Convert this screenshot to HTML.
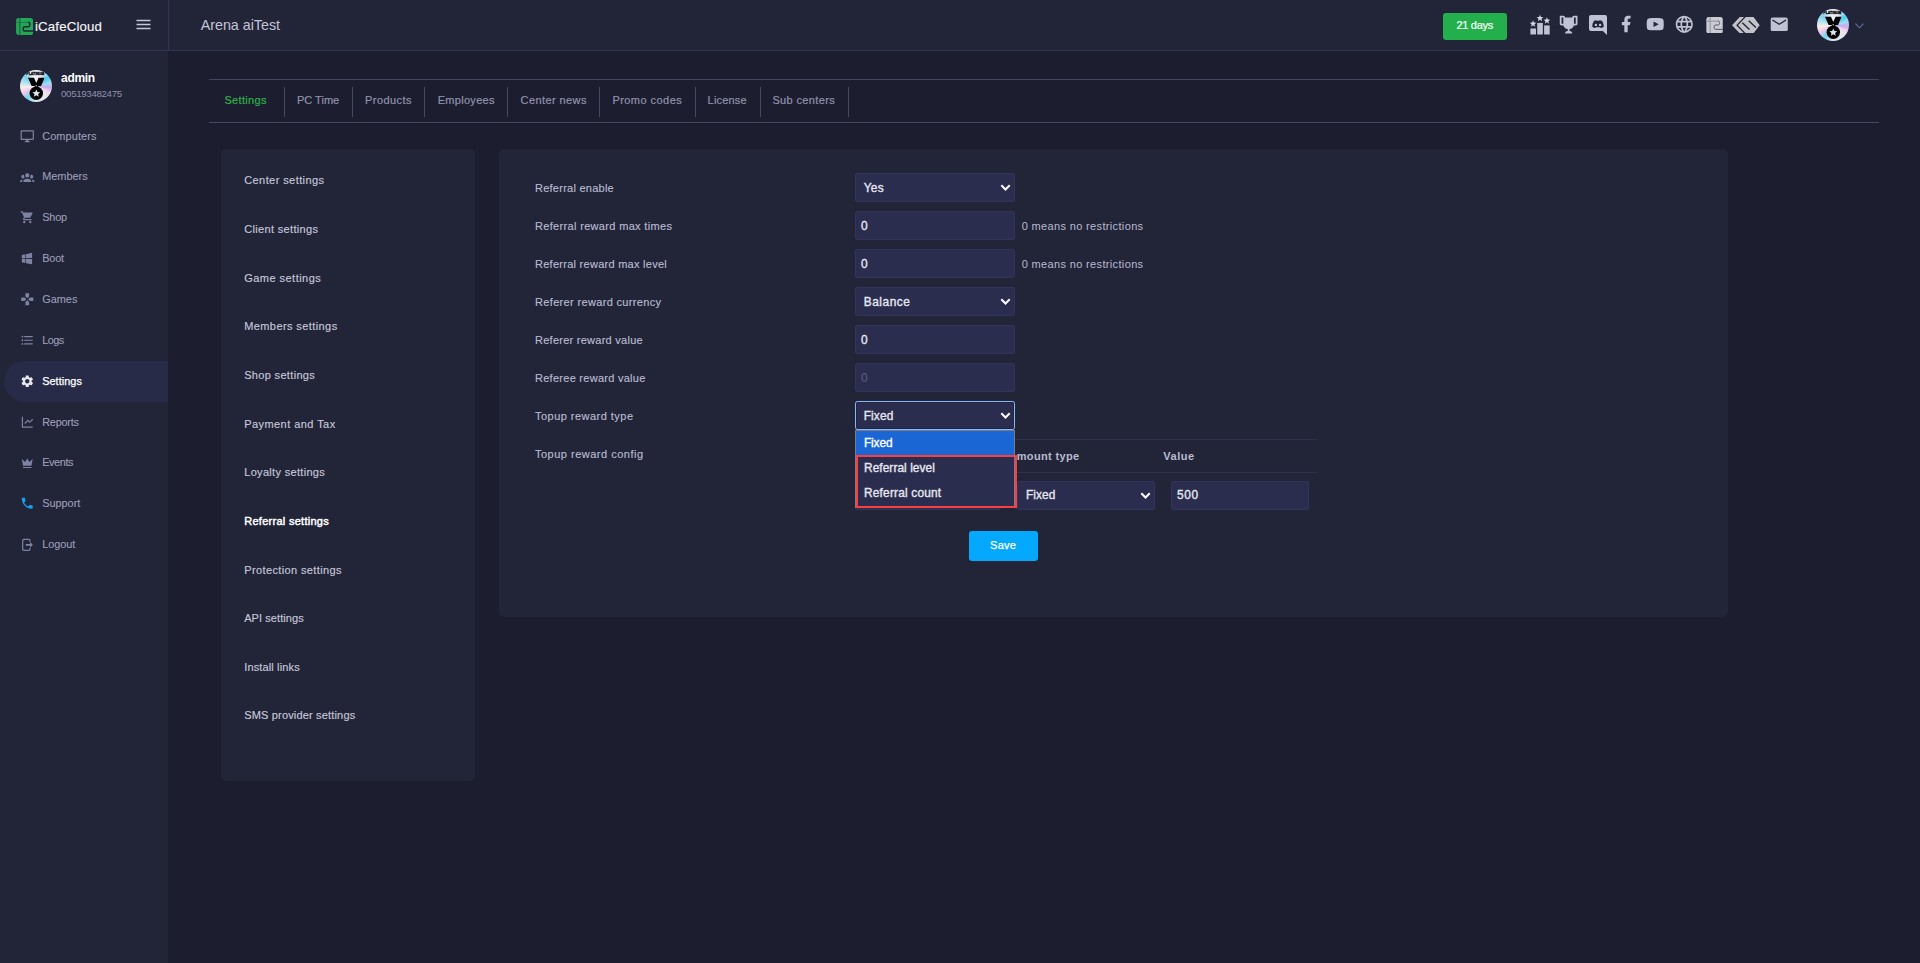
<!DOCTYPE html>
<html lang="en"><head><meta charset="utf-8"><title>iCafeCloud - Referral settings</title>
<style>
html,body{margin:0;padding:0}
body{width:1920px;height:963px;overflow:hidden;background:#1c1d2f;font-family:"Liberation Sans",sans-serif;position:relative;color:#c9cbdd}
div,span,a,nav,header,main,section,ul,li,label,button{box-sizing:border-box}
.a{position:absolute}
.t{position:absolute;white-space:nowrap;display:block}
svg{display:block}
header{position:absolute;left:0;top:0;width:1920px;height:51px;background:#222438;border-bottom:1px solid #323456}
nav.side{position:absolute;left:0;top:51px;width:168px;height:912px;background:#222438}
.vline{position:absolute;left:168px;top:0;width:1px;height:50px;background:#323456}
.active{position:absolute;left:3.500px;top:360.500px;width:164.500px;height:41px;border-radius:20.500px 0 0 20.500px;background:#282b47}
.panel{position:absolute;background:#222438;border-radius:5px}
.tabs{position:absolute;left:209px;top:79px;width:1670px;height:44px;border-top:1px solid #44465f;border-bottom:1px solid #44465f}
.sep{position:absolute;top:87px;width:1px;height:30px;background:#474961}
.in{position:absolute;height:29px;background:#2b2d4e;border:1px solid #32345a;border-radius:2px}
.av{width:32px;height:32px;border-radius:50%;overflow:hidden;background:conic-gradient(from 0deg,#eef1f7 0deg,#efe4f3 28deg,#49cbee 55deg,#a6dbf1 78deg,#c6a9ee 96deg,#f3d9ee 116deg,#e6e9f1 140deg,#dde5ee 180deg,#73d4ee 214deg,#eec9eb 240deg,#faeee8 264deg,#a9e0ef 290deg,#7fd1ea 312deg,#e6eef5 338deg,#eef1f7 360deg)}
.hl{position:absolute;height:1px;background:#2f3152}
</style></head>
<body>
<header>
<svg class="a" style="left:16px;top:18px" width="17.2" height="17" viewBox="0 0 17 17"><rect x="0" y="0" width="17" height="17" rx="2.4" fill="#22a854"/><path d="M3.750 0V17" fill="none" stroke="#1b4d40" stroke-width=".9"/><path d="M0 4.400H12.200" fill="none" stroke="#1d6847" stroke-width=".7"/><path d="M12 4.300c1.200 0 1.700.6 1.700 1.600v1.200c0 1-.5 1.600-1.700 1.600H8.800c-1.200 0-1.700.6-1.700 1.600v1.200c0 1 .5 1.600 1.700 1.600H17" fill="none" stroke="#222438" stroke-width="1.500"/></svg>
<span class="t" style="left:35.0px;top:17.2px;font-size:13.2px;line-height:20px;color:#f4f4f6;letter-spacing:0.19px;-webkit-text-stroke:.15px #f4f4f6;">iCafeCloud</span>
<svg class="a" style="left:136px;top:19px" width="16" height="11" viewBox="0 0 16 11"><path d="M0.5 1.5h14M0.5 5.500h14M0.5 9.500h14" stroke="#c4c6da" stroke-width="1.4" fill="none"/></svg>
<div class="vline"></div>
<span class="t" style="left:200.7px;top:14.8px;font-size:14.3px;line-height:20px;color:#c3c5d8;letter-spacing:-0.01px;">Arena aiTest</span>
<div class="a" style="left:1443px;top:13px;width:64px;height:27px;border-radius:3px;background:#23b04c"></div>
<span class="t" style="left:1456.4px;top:17.2px;font-size:11px;line-height:16px;color:#fff;letter-spacing:-0.27px;-webkit-text-stroke:.2px #fff;">21 days</span>
<svg class="a" style="left:1530px;top:15.600px;overflow:visible" width="20" height="18.500" viewBox="0 0 20 18.500" fill="#bfc2d2"><rect x="0.400" y="12.500" width="5.600" height="6"/><rect x="7.250" y="6.900" width="5.600" height="11.600"/><rect x="14.100" y="9.400" width="5.600" height="9.100"/><g fill="#d6d8e3"><path d="M3.10 4.20 L3.99 6.58 L6.52 6.69 L4.54 8.27 L5.22 10.71 L3.10 9.31 L0.98 10.71 L1.66 8.27 L-0.32 6.69 L2.21 6.58Z"/><path d="M10.00 -1.30 L10.89 1.08 L13.42 1.19 L11.44 2.77 L12.12 5.21 L10.00 3.81 L7.88 5.21 L8.56 2.77 L6.58 1.19 L9.11 1.08Z"/><path d="M16.90 1.20 L17.79 3.58 L20.32 3.69 L18.34 5.27 L19.02 7.71 L16.90 6.31 L14.78 7.71 L15.46 5.27 L13.48 3.69 L16.01 3.58Z"/></g></svg>
<svg class="a" style="position:absolute;left:1558.2px;top:14.2px;color:#bfc2d2" width="21.3" height="21.3" viewBox="0 0 24 24" fill="#bfc2d2" ><path d="M20.2,2H19.5H18C17.1,2 16,3 16,4H8C8,3 6.9,2 6,2H4.5H3.8H2V11C2,12 3,13 4,13H6.2C6.6,15 7.9,16.7 11,17V19.1C8.8,19.3 8,20.4 8,21.7V22H16V21.700C16,20.400 15.2,19.3 13,19.100V17C16.1,16.700 17.4,15 17.800,13H20C21,13 22,12 22,11V2H20.2M4,11V4H6V6V11C5.1,11 4.300,11 4,11M20,11C19.7,11 18.900,11 18,11V6V4H20V11Z"/></svg>
<svg class="a" style="left:1589px;top:15px" width="18" height="20" viewBox="0 0 18 20"><path d="M2 0h14a2 2 0 0 1 2 2v18l-4.200-4H2a2 2 0 0 1-2-2V2a2 2 0 0 1 2-2z" fill="#bfc2d2"/><g transform="translate(9 9.900) scale(1.22) translate(-9 -9.300)"><path d="M4.300 10.800c.1-2 .6-3.600 1.500-4.800 1-.5 1.700-.6 2-.6l.2.500h2l.2-.5c.3 0 1 .1 2 .6.900 1.200 1.400 2.800 1.500 4.800-.8.700-1.700 1-2.500 1.100l-.5-.8c-1.100.3-2.300.3-3.400 0l-.5.800c-.8-.1-1.700-.4-2.500-1.100z" fill="#222338"/><circle cx="7.300" cy="9.300" r="1" fill="#bfc2d2"/><circle cx="10.700" cy="9.300" r="1" fill="#bfc2d2"/></g></svg>
<svg class="a" style="position:absolute;left:1616.4px;top:14.2px;color:#bfc2d2" width="20" height="20" viewBox="0 0 24 24" fill="#bfc2d2" ><path d="M14 13.5h2.500l1-4H14v-2c0-1.030 0-2 2-2h1.500V2.140c-.326-.043-1.557-.14-2.857-.14C11.928 2 10 3.657 10 6.700v2.800H7v4h3V22h4v-8.500z"/></svg>
<svg class="a" style="position:absolute;left:1645.2px;top:15px;color:#bfc2d2" width="20.5" height="18.4" viewBox="0 0 24 24" fill="#bfc2d2" preserveAspectRatio="none"><path fill-rule="evenodd" d="M21.543 6.498C22 8.280 22 12 22 12s0 3.720-.457 5.502c-.254.985-.997 1.760-1.938 2.022C17.896 20 12 20 12 20s-5.893 0-7.605-.476c-.945-.266-1.687-1.040-1.938-2.022C2 15.720 2 12 2 12s0-3.720.457-5.502c.254-.985.997-1.760 1.938-2.022C6.107 4 12 4 12 4s5.896 0 7.605.476c.945.266 1.687 1.040 1.938 2.022zM10 15.500l6-3.500-6-3.500v7z"/></svg>
<svg class="a" style="position:absolute;left:1674.2px;top:13.9px;color:#bfc2d2" width="20.6" height="20.6" viewBox="0 0 24 24" fill="#bfc2d2" ><path d="M16.36,14C16.44,13.34 16.5,12.68 16.5,12C16.5,11.32 16.44,10.66 16.36,10H19.74C19.9,10.64 20,11.31 20,12C20,12.69 19.9,13.36 19.74,14M14.59,19.56C15.19,18.45 15.65,17.25 15.97,16H18.92C17.96,17.65 16.43,18.93 14.59,19.56M14.34,14H9.66C9.56,13.34 9.5,12.68 9.5,12C9.5,11.32 9.56,10.65 9.66,10H14.34C14.43,10.65 14.5,11.32 14.5,12C14.5,12.68 14.43,13.34 14.34,14M12,19.96C11.17,18.76 10.5,17.43 10.09,16H13.91C13.5,17.43 12.83,18.76 12,19.96M8,8H5.08C6.03,6.34 7.57,5.06 9.4,4.44C8.8,5.55 8.35,6.75 8,8M5.08,16H8C8.35,17.25 8.8,18.45 9.4,19.56C7.57,18.93 6.03,17.65 5.08,16M4.26,14C4.1,13.36 4,12.69 4,12C4,11.31 4.1,10.64 4.26,10H7.64C7.56,10.66 7.5,11.32 7.5,12C7.5,12.68 7.56,13.34 7.64,14M12,4.03C12.83,5.23 13.5,6.57 13.91,8H10.09C10.5,6.57 11.17,5.23 12,4.03M18.92,8H15.97C15.65,6.75 15.19,5.55 14.59,4.44C16.43,5.07 17.96,6.34 18.92,8M12,2C6.47,2 2,6.5 2,12A10,10 0 0,0 12,22A10,10 0 0,0 22,12A10,10 0 0,0 12,2Z"/></svg>
<svg class="a" style="left:1705.500px;top:16.500px" width="17.100" height="16.400" viewBox="0 0 17 17"><rect x="0" y="0" width="17" height="17" rx="2.400" fill="#cbccd1"/><path d="M3.900 0V17M0 4.300H12.200" fill="none" stroke="#85879a" stroke-width=".9"/><path d="M12 4.300c1.200 0 1.700.6 1.700 1.600v.8c0 1-.5 1.600-1.700 1.600H9.800c-1.200 0-1.700.6-1.700 1.600v1.300c0 1 .5 1.600 1.700 1.600H17" fill="none" stroke="#4d4f66" stroke-width="1"/></svg>
<svg class="a" style="left:1732.200px;top:16.800px" width="27.700" height="16.300" viewBox="0 0 27.700 16.300"><path d="M7.800 0H12L4.200 8.150 12 16.300H7.800L0 8.150z" fill="#c3c4c9"/><path d="M13.800 0h7.700l6.200 8.150-6.200 8.150h-7.700L6 8.150z" fill="#c3c4c9"/><path d="M10.300 5.700l7.200 6.900M16.700 3.700l7.200 6.700" stroke="#222438" stroke-width="1.400" fill="none"/></svg>
<svg class="a" style="position:absolute;left:1769.3px;top:14.2px;color:#bfc2d2" width="20.5" height="20.5" viewBox="0 0 24 24" fill="#bfc2d2" ><path d="M20 4H4c-1.100 0-1.990.9-1.990 2L2 18c0 1.100.9 2 2 2h16c1.100 0 2-.9 2-2V6c0-1.100-.9-2-2-2zm0 4l-8 5-8-5V6l8 5 8-5v2z"/></svg>
<div class="a av" style="left:1817px;top:9px"><svg width="32" height="32" viewBox="0 0 32 32"><text x="15.300" y="4.900" font-family="Liberation Sans, sans-serif" font-size="3.900" font-weight="700" text-anchor="middle" textLength="18" lengthAdjust="spacingAndGlyphs" fill="#000" stroke="#000" stroke-width=".3">PLATINUM</text><path d="M8 7.700h6l2.300 5.200 2.300-5.200h5.900l-3.400 8.300h-2.600l-.8 1.300h-2.400l-.8-1.300h-2.900z" fill="#000"/><circle cx="16.300" cy="23.300" r="6.700" fill="#000"/><circle cx="16.200" cy="15.700" r=".7" fill="#cfd6e4"/><path d="M16.300 19.400l1.150 2.500 2.750.3-2.050 1.850.55 2.700-2.400-1.400-2.400 1.400.55-2.700-2.050-1.850 2.750-.3z" fill="#dfe3ee"/></svg></div>
<svg class="a" style="left:1855px;top:22.500px" width="9" height="6" viewBox="0 0 9 6"><path d="M0.500 0.700l4 4.100 4-4.100" fill="none" stroke="#6172a6" stroke-width="1.100"/></svg></header><nav class="side"></nav>
<div class="a av" style="left:20px;top:70px"><svg width="32" height="32" viewBox="0 0 32 32"><text x="15.300" y="4.900" font-family="Liberation Sans, sans-serif" font-size="3.900" font-weight="700" text-anchor="middle" textLength="18" lengthAdjust="spacingAndGlyphs" fill="#000" stroke="#000" stroke-width=".3">PLATINUM</text><path d="M8 7.700h6l2.300 5.200 2.300-5.200h5.900l-3.400 8.300h-2.600l-.8 1.300h-2.400l-.8-1.300h-2.900z" fill="#000"/><circle cx="16.300" cy="23.300" r="6.700" fill="#000"/><circle cx="16.200" cy="15.700" r=".7" fill="#cfd6e4"/><path d="M16.300 19.400l1.150 2.500 2.750.3-2.050 1.850.55 2.700-2.400-1.400-2.400 1.400.55-2.700-2.050-1.850 2.750-.3z" fill="#dfe3ee"/></svg></div>
<span class="t" style="left:61.0px;top:69.5px;font-size:12px;line-height:16px;color:#fff;font-weight:700;letter-spacing:-0.29px;">admin</span>
<span class="t" style="left:61.0px;top:85.7px;font-size:9.7px;line-height:16px;color:#8e91ad;letter-spacing:-0.32px;">005193482475</span>
<div class="active"></div><svg style="position:absolute;left:20px;top:128.7px;color:#7f83a3" width="14.5" height="14.5" viewBox="0 0 24 24" fill="#7f83a3" ><path d="M21,16H3V4H21M21,2H3C1.89,2 1,2.89 1,4V16A2,2 0 0,0 3,18H10V20H8V22H16V20H14V18H21A2,2 0 0,0 23,16V4C23,2.89 22.1,2 21,2Z"/></svg>
<span class="t" style="left:42.2px;top:127.6px;font-size:10.9px;line-height:16px;color:#9c9fb8;letter-spacing:0.12px;-webkit-text-stroke:.1px currentColor;">Computers</span><svg style="position:absolute;left:20px;top:169.5px;color:#7f83a3" width="14.5" height="14.5" viewBox="0 0 24 24" fill="#7f83a3" ><path d="M12,5.5A3.5,3.5 0 0,1 15.5,9A3.5,3.5 0 0,1 12,12.5A3.5,3.5 0 0,1 8.5,9A3.5,3.5 0 0,1 12,5.5M5,8C5.56,8 6.08,8.15 6.53,8.42C6.38,9.85 6.8,11.27 7.66,12.38C7.16,13.34 6.16,14 5,14A3,3 0 0,1 2,11A3,3 0 0,1 5,8M19,8A3,3 0 0,1 22,11A3,3 0 0,1 19,14C17.84,14 16.84,13.34 16.34,12.38C17.2,11.27 17.62,9.85 17.47,8.42C17.92,8.15 18.44,8 19,8M5.5,18.25C5.5,16.18 8.41,14.5 12,14.5C15.59,14.5 18.5,16.18 18.5,18.25V20H5.5V18.25M0,20V18.5C0,17.11 1.89,15.94 4.45,15.6C3.86,16.28 3.5,17.22 3.5,18.25V20H0M24,20H20.5V18.25C20.5,17.22 20.14,16.28 19.55,15.6C22.11,15.94 24,17.11 24,18.5V20Z"/></svg>
<span class="t" style="left:42.2px;top:168.4px;font-size:10.9px;line-height:16px;color:#9c9fb8;letter-spacing:0.02px;-webkit-text-stroke:.1px currentColor;">Members</span><svg style="position:absolute;left:20px;top:210.4px;color:#7f83a3" width="14.5" height="14.5" viewBox="0 0 24 24" fill="#7f83a3" ><path d="M17,18C15.89,18 15,18.89 15,20A2,2 0 0,0 17,22A2,2 0 0,0 19,20C19,18.89 18.1,18 17,18M1,2V4H3L6.6,11.59L5.24,14.04C5.09,14.32 5,14.65 5,15A2,2 0 0,0 7,17H19V15H7.42A0.25,0.25 0 0,1 7.17,14.75C7.17,14.7 7.18,14.66 7.2,14.63L8.1,13H15.55C16.3,13 16.96,12.58 17.3,11.97L20.88,5.5C20.95,5.34 21,5.17 21,5A1,1 0 0,0 20,4H5.21L4.27,2M7,18C5.89,18 5,18.89 5,20A2,2 0 0,0 7,22A2,2 0 0,0 9,20C9,18.89 8.1,18 7,18Z"/></svg>
<span class="t" style="left:42.2px;top:209.3px;font-size:10.9px;line-height:16px;color:#9c9fb8;letter-spacing:-0.18px;-webkit-text-stroke:.1px currentColor;">Shop</span><svg style="position:absolute;left:20px;top:251.2px;color:#7f83a3" width="14.5" height="14.5" viewBox="0 0 24 24" fill="#7f83a3" ><path d="M3,12V6.75L9,5.43V11.91L3,12M20,3V11.75L10,11.9V5.21L20,3M3,13L9,13.09V19.9L3,18.75V13M20,13.25V22L10,20.09V13.1L20,13.25Z"/></svg>
<span class="t" style="left:42.2px;top:250.1px;font-size:10.9px;line-height:16px;color:#9c9fb8;letter-spacing:-0.17px;-webkit-text-stroke:.1px currentColor;">Boot</span><svg style="position:absolute;left:20px;top:292.1px;color:#7f83a3" width="14.5" height="14.5" viewBox="0 0 24 24" fill="#7f83a3" ><path d="M15 7.5V2H9v5.5l3 3 3-3zM7.5 9H2v6h5.5l3-3-3-3zM9 16.5V22h6v-5.5l-3-3-3 3zM16.5 9l-3 3 3 3H22V9h-5.5z"/></svg>
<span class="t" style="left:42.2px;top:291.0px;font-size:10.9px;line-height:16px;color:#9c9fb8;letter-spacing:0.02px;-webkit-text-stroke:.1px currentColor;">Games</span><svg style="position:absolute;left:20px;top:333.0px;color:#7f83a3" width="14.5" height="14.5" viewBox="0 0 24 24" fill="#7f83a3" ><path d="M7,5H21V7H7V5M7,13V11H21V13H7M4,4.5A1.5,1.5 0 0,1 5.5,6A1.5,1.5 0 0,1 4,7.5A1.5,1.5 0 0,1 2.5,6A1.5,1.5 0 0,1 4,4.5M4,10.5A1.5,1.5 0 0,1 5.5,12A1.5,1.5 0 0,1 4,13.5A1.5,1.5 0 0,1 2.5,12A1.5,1.5 0 0,1 4,10.5M7,19V17H21V19H7M4,16.5A1.5,1.5 0 0,1 5.5,18A1.5,1.5 0 0,1 4,19.5A1.5,1.5 0 0,1 2.5,18A1.5,1.5 0 0,1 4,16.5Z"/></svg>
<span class="t" style="left:42.2px;top:331.9px;font-size:10.9px;line-height:16px;color:#9c9fb8;letter-spacing:-0.51px;-webkit-text-stroke:.1px currentColor;">Logs</span><svg style="position:absolute;left:20px;top:373.8px;color:#e6e7ee" width="14.5" height="14.5" viewBox="0 0 24 24" fill="#e6e7ee" ><path d="M19.14,12.94c0.04-0.3,0.06-0.61,0.06-0.94c0-0.32-0.02-0.64-0.07-0.94l2.03-1.58c0.18-0.14,0.23-0.41,0.12-0.61 l-1.92-3.32c-0.12-0.22-0.37-0.29-0.59-0.22l-2.39,0.96c-0.5-0.38-1.03-0.7-1.62-0.94L14.4,2.81c-0.04-0.24-0.24-0.41-0.48-0.41 h-3.84c-0.24,0-0.43,0.17-0.47,0.41L9.25,5.35C8.66,5.59,8.12,5.92,7.63,6.29L5.24,5.33c-0.22-0.08-0.47,0-0.59,0.22L2.74,8.87 C2.62,9.08,2.66,9.34,2.86,9.48l2.03,1.58C4.84,11.36,4.8,11.69,4.8,12s0.02,0.64,0.07,0.94l-2.03,1.58 c-0.18,0.14-0.23,0.41-0.12,0.61l1.92,3.32c0.12,0.22,0.37,0.29,0.59,0.22l2.39-0.96c0.5,0.38,1.03,0.7,1.62,0.94l0.36,2.54 c0.05,0.24,0.24,0.41,0.48,0.41h3.84c0.24,0,0.44-0.17,0.47-0.41l0.36-2.54c0.59-0.24,1.13-0.56,1.62-0.94l2.39,0.96 c0.22,0.08,0.47,0,0.59-0.22l1.92-3.32c0.12-0.22,0.07-0.47-0.12-0.61L19.14,12.94z M12,15.6c-1.98,0-3.6-1.62-3.6-3.6 s1.62-3.6,3.6-3.6s3.6,1.62,3.6,3.6S13.980,15.6,12,15.6z"/></svg>
<span class="t" style="left:42.2px;top:372.7px;font-size:10.9px;line-height:16px;color:#fff;letter-spacing:0.05px;-webkit-text-stroke:.25px #fff;">Settings</span><svg style="position:absolute;left:20px;top:414.6px;color:#7f83a3" width="14.5" height="14.5" viewBox="0 0 24 24" fill="#7f83a3" ><path d="M5 3v16h16v2H3V3h2zm15.293 3.293l1.414 1.414L16 13.414l-3-2.999-4.293 4.292-1.414-1.414L13 7.586l3 2.999 4.293-4.292z"/></svg>
<span class="t" style="left:42.2px;top:413.5px;font-size:10.9px;line-height:16px;color:#9c9fb8;letter-spacing:-0.22px;-webkit-text-stroke:.1px currentColor;">Reports</span><svg style="position:absolute;left:20px;top:455.5px;color:#7f83a3" width="14.5" height="14.5" viewBox="0 0 24 24" fill="#7f83a3" ><path d="M5 16L3 5L8.500 10L12 4L15.500 10L21 5L19 16H5M19 19C19 19.600 18.600 20 18 20H6C5.400 20 5 19.600 5 19V18H19V19Z"/></svg>
<span class="t" style="left:42.2px;top:454.4px;font-size:10.9px;line-height:16px;color:#9c9fb8;letter-spacing:-0.4px;-webkit-text-stroke:.1px currentColor;">Events</span><svg style="position:absolute;left:20px;top:496.4px;color:#11a4f4" width="14.5" height="14.5" viewBox="0 0 24 24" fill="#11a4f4" ><path d="M6.62 10.79c1.44 2.83 3.76 5.14 6.59 6.59l2.2-2.2c.27-.27.67-.36 1.02-.24 1.12.37 2.33.57 3.570.57.55 0 1 .45 1 1V20c0 .55-.45 1-1 1-9.39 0-17-7.610-17-17 0-.55.45-1 1-1h3.500c.55 0 1 .45 1 1 0 1.250.2 2.450.57 3.570.11.35.03.74-.25 1.020l-2.2 2.2z"/></svg>
<span class="t" style="left:42.2px;top:495.2px;font-size:10.9px;line-height:16px;color:#9c9fb8;letter-spacing:-0.01px;-webkit-text-stroke:.1px currentColor;">Support</span><svg style="position:absolute;left:20px;top:537.2px;color:#7f83a3" width="14.5" height="14.5" viewBox="0 0 24 24" fill="#7f83a3" ><path d="M16.500 8V5.600a1.800 1.800 0 0 0-1.800-1.800H6.300a1.800 1.800 0 0 0-1.800 1.800v14.800a1.800 1.800 0 0 0 1.800 1.800h8.400a1.800 1.800 0 0 0 1.800-1.800V18" fill="none" stroke="currentColor" stroke-width="2"/><path d="M9.500 11.400h7V8.200l4.800 4.800-4.800 4.800v-3.200h-7z"/></svg>
<span class="t" style="left:42.2px;top:536.1px;font-size:10.9px;line-height:16px;color:#9c9fb8;letter-spacing:-0.04px;-webkit-text-stroke:.1px currentColor;">Logout</span>
<div class="tabs"></div>
<span class="t" style="left:224.4px;top:92.4px;font-size:11px;line-height:16px;color:#2cb34a;letter-spacing:0.34px;-webkit-text-stroke:.2px currentColor;">Settings</span>
<span class="t" style="left:296.9px;top:92.4px;font-size:11px;line-height:16px;color:#9093ad;letter-spacing:0.02px;-webkit-text-stroke:.2px currentColor;">PC Time</span>
<span class="t" style="left:365.0px;top:92.4px;font-size:11px;line-height:16px;color:#9093ad;letter-spacing:0.45px;-webkit-text-stroke:.2px currentColor;">Products</span>
<span class="t" style="left:437.7px;top:92.4px;font-size:11px;line-height:16px;color:#9093ad;letter-spacing:0.3px;-webkit-text-stroke:.2px currentColor;">Employees</span>
<span class="t" style="left:520.6px;top:92.4px;font-size:11px;line-height:16px;color:#9093ad;letter-spacing:0.41px;-webkit-text-stroke:.2px currentColor;">Center news</span>
<span class="t" style="left:612.4px;top:92.4px;font-size:11px;line-height:16px;color:#9093ad;letter-spacing:0.45px;-webkit-text-stroke:.2px currentColor;">Promo codes</span>
<span class="t" style="left:707.6px;top:92.4px;font-size:11px;line-height:16px;color:#9093ad;letter-spacing:0.18px;-webkit-text-stroke:.2px currentColor;">License</span>
<span class="t" style="left:772.4px;top:92.4px;font-size:11px;line-height:16px;color:#9093ad;letter-spacing:0.37px;-webkit-text-stroke:.2px currentColor;">Sub centers</span>
<div class="sep" style="left:284px"></div>
<div class="sep" style="left:352px"></div>
<div class="sep" style="left:424px"></div>
<div class="sep" style="left:507px"></div>
<div class="sep" style="left:599px"></div>
<div class="sep" style="left:695px"></div>
<div class="sep" style="left:760px"></div>
<div class="sep" style="left:848px"></div>
<div class="panel" style="left:221px;top:149px;width:254px;height:632px"></div>
<span class="t" style="left:244.2px;top:172.4px;font-size:11px;line-height:16px;color:#c6c8da;letter-spacing:0.42px;-webkit-text-stroke:.15px currentColor;">Center settings</span>
<span class="t" style="left:244.2px;top:221.0px;font-size:11px;line-height:16px;color:#c6c8da;letter-spacing:0.34px;-webkit-text-stroke:.15px currentColor;">Client settings</span>
<span class="t" style="left:244.2px;top:269.7px;font-size:11px;line-height:16px;color:#c6c8da;letter-spacing:0.47px;-webkit-text-stroke:.15px currentColor;">Game settings</span>
<span class="t" style="left:244.2px;top:318.3px;font-size:11px;line-height:16px;color:#c6c8da;letter-spacing:0.41px;-webkit-text-stroke:.15px currentColor;">Members settings</span>
<span class="t" style="left:244.2px;top:366.9px;font-size:11px;line-height:16px;color:#c6c8da;letter-spacing:0.33px;-webkit-text-stroke:.15px currentColor;">Shop settings</span>
<span class="t" style="left:244.2px;top:415.6px;font-size:11px;line-height:16px;color:#c6c8da;letter-spacing:0.44px;-webkit-text-stroke:.15px currentColor;">Payment and Tax</span>
<span class="t" style="left:244.2px;top:464.2px;font-size:11px;line-height:16px;color:#c6c8da;letter-spacing:0.32px;-webkit-text-stroke:.15px currentColor;">Loyalty settings</span>
<span class="t" style="left:244.2px;top:512.9px;font-size:11px;line-height:16px;color:#fff;letter-spacing:0.28px;-webkit-text-stroke:.45px #fff;">Referral settings</span>
<span class="t" style="left:244.2px;top:561.5px;font-size:11px;line-height:16px;color:#c6c8da;letter-spacing:0.38px;-webkit-text-stroke:.15px currentColor;">Protection settings</span>
<span class="t" style="left:244.2px;top:610.1px;font-size:11px;line-height:16px;color:#c6c8da;letter-spacing:0.07px;-webkit-text-stroke:.15px currentColor;">API settings</span>
<span class="t" style="left:244.2px;top:658.8px;font-size:11px;line-height:16px;color:#c6c8da;letter-spacing:0.14px;-webkit-text-stroke:.15px currentColor;">Install links</span>
<span class="t" style="left:244.2px;top:707.4px;font-size:11px;line-height:16px;color:#c6c8da;letter-spacing:0.17px;-webkit-text-stroke:.15px currentColor;">SMS provider settings</span>
<div class="panel" style="left:499px;top:149px;width:1229px;height:468px"></div>
<span class="t" style="left:535.0px;top:180.3px;font-size:11px;line-height:16px;color:#b9bbd0;letter-spacing:0.25px;-webkit-text-stroke:.15px currentColor;">Referral enable</span>
<span class="t" style="left:535.0px;top:218.3px;font-size:11px;line-height:16px;color:#b9bbd0;letter-spacing:0.33px;-webkit-text-stroke:.15px currentColor;">Referral reward max times</span>
<span class="t" style="left:535.0px;top:256.3px;font-size:11px;line-height:16px;color:#b9bbd0;letter-spacing:0.27px;-webkit-text-stroke:.15px currentColor;">Referral reward max level</span>
<span class="t" style="left:535.0px;top:294.3px;font-size:11px;line-height:16px;color:#b9bbd0;letter-spacing:0.34px;-webkit-text-stroke:.15px currentColor;">Referer reward currency</span>
<span class="t" style="left:535.0px;top:332.3px;font-size:11px;line-height:16px;color:#b9bbd0;letter-spacing:0.26px;-webkit-text-stroke:.15px currentColor;">Referer reward value</span>
<span class="t" style="left:535.0px;top:370.3px;font-size:11px;line-height:16px;color:#b9bbd0;letter-spacing:0.27px;-webkit-text-stroke:.15px currentColor;">Referee reward value</span>
<span class="t" style="left:535.0px;top:408.3px;font-size:11px;line-height:16px;color:#b9bbd0;letter-spacing:0.47px;-webkit-text-stroke:.15px currentColor;">Topup reward type</span>
<span class="t" style="left:535.0px;top:446.3px;font-size:11px;line-height:16px;color:#b9bbd0;letter-spacing:0.5px;-webkit-text-stroke:.15px currentColor;">Topup reward config</span>
<div class="in" style="left:855px;top:173px;width:160px">
<svg class="a" style="right:3px;top:9.500px" width="11" height="8" viewBox="0 0 11 8"><path d="M1.300 1.300l4.200 4.200 4.200-4.200" fill="none" stroke="#fff" stroke-width="2"/></svg></div>
<span class="t" style="left:863.7px;top:180.0px;font-size:11.9px;line-height:16px;color:#e6e7f2;letter-spacing:0.3px;-webkit-text-stroke:.35px currentColor;">Yes</span>
<div class="in" style="left:855px;top:211px;width:160px"></div>
<span class="t" style="left:861.1px;top:218.0px;font-size:11.9px;line-height:16px;color:#e6e7f2;-webkit-text-stroke:.35px currentColor;">0</span>
<div class="in" style="left:855px;top:249px;width:160px"></div>
<span class="t" style="left:861.1px;top:256.0px;font-size:11.9px;line-height:16px;color:#e6e7f2;-webkit-text-stroke:.35px currentColor;">0</span>
<div class="in" style="left:855px;top:287px;width:160px">
<svg class="a" style="right:3px;top:9.500px" width="11" height="8" viewBox="0 0 11 8"><path d="M1.300 1.300l4.200 4.200 4.200-4.200" fill="none" stroke="#fff" stroke-width="2"/></svg></div>
<span class="t" style="left:863.7px;top:294.0px;font-size:11.9px;line-height:16px;color:#e6e7f2;letter-spacing:0.54px;-webkit-text-stroke:.35px currentColor;">Balance</span>
<div class="in" style="left:855px;top:325px;width:160px"></div>
<span class="t" style="left:861.1px;top:332.0px;font-size:11.9px;line-height:16px;color:#e6e7f2;-webkit-text-stroke:.35px currentColor;">0</span>
<div class="in" style="left:855px;top:363px;width:160px"></div>
<span class="t" style="left:861.1px;top:370.0px;font-size:11.9px;line-height:16px;color:#5d5f7e;">0</span>
<div class="in" style="left:855px;top:401px;width:160px">
<svg class="a" style="right:3px;top:9.500px" width="11" height="8" viewBox="0 0 11 8"><path d="M1.300 1.300l4.200 4.200 4.200-4.200" fill="none" stroke="#fff" stroke-width="2"/></svg></div>
<span class="t" style="left:863.7px;top:408.0px;font-size:11.9px;line-height:16px;color:#e6e7f2;letter-spacing:0.13px;-webkit-text-stroke:.35px currentColor;">Fixed</span>
<span class="t" style="left:1021.7px;top:218.3px;font-size:11px;line-height:16px;color:#b9bbd0;letter-spacing:0.35px;">0 means no restrictions</span>
<span class="t" style="left:1021.7px;top:256.3px;font-size:11px;line-height:16px;color:#b9bbd0;letter-spacing:0.35px;">0 means no restrictions</span>
<div class="hl" style="left:855px;top:439px;width:462px"></div>
<div class="hl" style="left:855px;top:472px;width:462px"></div>
<span class="t" style="left:1008.4px;top:447.6px;font-size:11px;line-height:16px;color:#b9bbd0;font-weight:700;letter-spacing:0.35px;">Amount type</span>
<span class="t" style="left:1163.3px;top:447.6px;font-size:11px;line-height:16px;color:#b9bbd0;font-weight:700;letter-spacing:0.54px;">Value</span>
<div class="in" style="left:855px;top:481px;width:146px"></div>
<div class="in" style="left:1017px;top:481px;width:138px">
<svg class="a" style="right:3px;top:9.500px" width="11" height="8" viewBox="0 0 11 8"><path d="M1.300 1.300l4.200 4.200 4.200-4.200" fill="none" stroke="#fff" stroke-width="2"/></svg></div>
<span class="t" style="left:1025.9px;top:487.0px;font-size:11.9px;line-height:16px;color:#e6e7f2;letter-spacing:0.08px;-webkit-text-stroke:.35px currentColor;">Fixed</span>
<div class="in" style="left:1171px;top:481px;width:138px"></div>
<span class="t" style="left:1177.1px;top:487.3px;font-size:11.9px;line-height:16px;color:#e6e7f2;letter-spacing:0.63px;-webkit-text-stroke:.35px currentColor;">500</span>
<div class="a" style="left:969px;top:531px;width:69px;height:30px;border-radius:3px;background:#04a8fc"></div>
<span class="t" style="left:990.1px;top:537.3px;font-size:11px;line-height:16px;color:#fff;letter-spacing:0.24px;-webkit-text-stroke:.25px #fff;">Save</span>
<div class="a" style="left:855px;top:401px;width:160px;height:29px;border:1px solid #88b8fb;border-radius:2.500px;box-shadow:inset 0 0 0 1px #23243e"></div>
<div class="a" style="left:855px;top:430px;width:160px;height:78px;background:#2b2d4e;border:1px solid #7b7c84"></div>
<div class="a" style="left:856px;top:431px;width:158px;height:24px;background:#1a66d4"></div>
<span class="t" style="left:863.9px;top:435.0px;font-size:11.9px;line-height:16px;color:#fff;letter-spacing:-0.09px;-webkit-text-stroke:.35px currentColor;">Fixed</span>
<span class="t" style="left:864.0px;top:459.9px;font-size:11.9px;line-height:16px;color:#e6e7f2;letter-spacing:0.06px;-webkit-text-stroke:.35px currentColor;">Referral level</span>
<span class="t" style="left:864.0px;top:484.8px;font-size:11.9px;line-height:16px;color:#e6e7f2;letter-spacing:0.19px;-webkit-text-stroke:.35px currentColor;">Referral count</span>
<div class="a" style="left:856px;top:455px;width:161px;height:53px;border:2px solid #fb3f40"></div>
</body></html>
